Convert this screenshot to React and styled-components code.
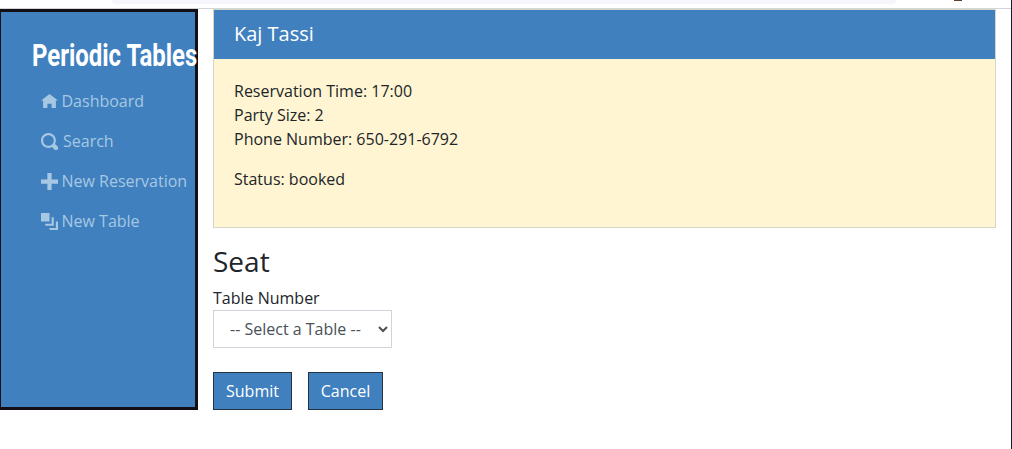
import React from "react";
import styled, { createGlobalStyle } from "styled-components";

const blue = "#4080bf";

const GlobalStyle = createGlobalStyle`
  * { box-sizing: border-box; }
  body {
    margin: 0;
    overflow: hidden;
    background: #fff;
    color: #212529;
    font: 400 16px/24px "Open Sans", "Noto Sans", sans-serif;
  }
`;

const Page = styled.div`
  height: 449px;
  border-right: 1px solid #10202c;
`;

const BrowserEdge = styled.div`
  display: flex;
  justify-content: space-between;
  height: 9px;
  padding: 0 49px 0 112px;
  border-bottom: 1px solid #d3d6d6;
`;

const AddressBar = styled.div`
  width: 784px;
  height: 4px;
  background: #f5f5fb;
  border-radius: 0 0 6px 6px;
`;

const Avatar = styled.div`
  width: 8px;
  height: 1px;
  background: #5b4134;
`;

const Shell = styled.div`
  display: flex;
  align-items: flex-start;
`;

const Sidebar = styled.aside`
  flex: none;
  width: 198px;
  height: 401px;
  padding: 23px 0 0 31px;
  background: ${blue};
  border: 3px solid #130f14;
  border-left-width: 1px;
`;

const Brand = styled.div`
  height: 46px;
  color: #fff;
  font: 700 32px/40px Roboto, sans-serif;
  white-space: nowrap;
  transform: scaleX(0.748);
  transform-origin: left;
`;

const Nav = styled.nav`
  display: flex;
  flex-direction: column;
  padding-left: 9px;
`;

const NavLink = styled.a`
  display: flex;
  align-items: center;
  gap: ${(p) => p.$gap || 3.5}px;
  height: 40px;
  color: #a6c8e2;
  white-space: nowrap;
`;

const Icon = styled.svg`
  flex: none;
  width: 17px;
  height: 17px;
  fill: currentColor;
`;

const Main = styled.main`
  flex: 1;
  padding: 0 15px;
`;

const Card = styled.section`
  height: 219px;
  background: #fff5d2;
  border: 1px solid #d5d5c8;
`;

const CardHeader = styled.h5`
  height: 49px;
  margin: 0;
  padding: 12px 20px;
  background: ${blue};
  color: #fff;
  font-size: 20px;
  font-weight: 400;
  line-height: 24px;
`;

const CardBody = styled.div`
  padding: 20px;
`;

const Details = styled.p`
  margin: 0 0 16px;
`;

const Heading = styled.h3`
  margin: 16px 0 8px;
  font-size: 28px;
  font-weight: 400;
  line-height: 34px;
`;

const Label = styled.label`
  display: block;
`;

const Select = styled.select`
  display: block;
  width: 179px;
  height: 38px;
  padding: 6px 12px;
  color: #495057;
  background: #fff;
  border: 1px solid #ced4da;
  border-radius: 0;
  font: inherit;
`;

const Actions = styled.div`
  display: flex;
  gap: 16px;
  margin-top: 24px;
`;

const Button = styled.button`
  width: ${(p) => p.$width}px;
  height: 38px;
  padding: 0;
  color: #fff;
  background: ${blue};
  border: 1px solid #263341;
  font: inherit;
`;

const links = [
  { label: "Dashboard", d: "M4 .5l-4 3h1v3.5h2v-2h2v2h2v-3.5h1l-4-3z" },
  {
    label: "Search",
    gap: 5,
    d: "M3.5 0c-1.93 0-3.5 1.57-3.5 3.5s1.57 3.5 3.5 3.5c.59 0 1.17-.14 1.66-.41a1 1 0 0 0 .13.13l1 1a1.02 1.02 0 1 0 1.44-1.44l-1-1a1 1 0 0 0-.16-.13c.27-.49.44-1.06.44-1.66 0-1.93-1.55-3.5-3.5-3.5zm0 1c1.39 0 2.5 1.11 2.5 2.5 0 .66-.24 1.27-.66 1.72l-.03.03a1 1 0 0 0-.13.13c-.44.4-1.04.63-1.69.63-1.39 0-2.5-1.11-2.5-2.5s1.11-2.5 2.5-2.5z",
  },
  { label: "New Reservation", d: "M3 0v3h-3v2h3v3h2v-3h3v-2h-3v-3h-2z" },
  { label: "New Table", d: "M0 0v4h4v-4h-4zm5 2v3h-3v1h4v-4h-1zm2 2v3h-3v1h4v-4h-1z" },
];

export default function App() {
  return (
    <Page>
      <GlobalStyle />
      <BrowserEdge>
        <AddressBar />
        <Avatar />
      </BrowserEdge>
      <Shell>
        <Sidebar>
          <Brand>Periodic Tables</Brand>
          <Nav>
            {links.map(({ label, gap, d }) => (
              <NavLink key={label} $gap={gap}>
                <Icon viewBox="0 0 8 8"><path d={d} /></Icon>
                <span>{label}</span>
              </NavLink>
            ))}
          </Nav>
        </Sidebar>
        <Main>
          <Card>
            <CardHeader>Kaj Tassi</CardHeader>
            <CardBody>
              <Details>
                Reservation Time: 17:00<br />
                Party Size: 2<br />
                Phone Number: 650-291-6792
              </Details>
              <Details>Status: booked</Details>
            </CardBody>
          </Card>
          <Heading>Seat</Heading>
          <Label htmlFor="table">Table Number</Label>
          <Select id="table" defaultValue="">
            <option value="">-- Select a Table --</option>
          </Select>
          <Actions>
            <Button type="button" $width={79}>Submit</Button>
            <Button type="button" $width={75}>Cancel</Button>
          </Actions>
        </Main>
      </Shell>
    </Page>
  );
}
